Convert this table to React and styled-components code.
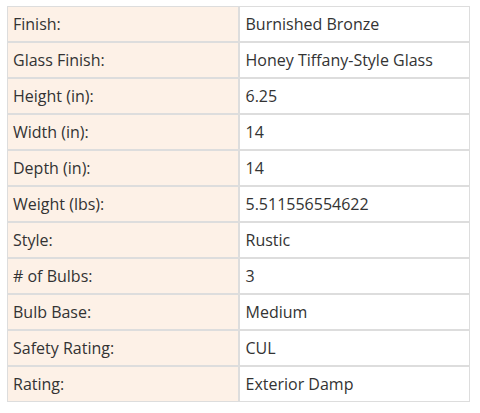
import React from "react";
import styled, { createGlobalStyle } from "styled-components";

const Global = createGlobalStyle`
  html, body { margin: 0; padding: 0; background: #fff; }
`;

const Page = styled.div`
  padding: 6px 10px 0 7px;
`;

const Table = styled.table`
  width: 463px;
  border-collapse: separate;
  border-spacing: 0;
  font-family: "Open Sans", "Liberation Sans", sans-serif;
  font-size: 16px;
  color: #333;
`;

const Cell = styled.td`
  width: 50%;
  height: 36px;
  box-sizing: border-box;
  padding: 0 6px 1px ${(p) => (p.$label ? "5px" : "6px")};
  border: 1px solid #ddd;
  background: ${(p) => (p.$label ? "#fdf1e7" : "#fff")};
  vertical-align: middle;
  white-space: nowrap;
`;

const rows = [
  ["Finish:", "Burnished Bronze"],
  ["Glass Finish:", "Honey Tiffany-Style Glass"],
  ["Height (in):", "6.25"],
  ["Width (in):", "14"],
  ["Depth (in):", "14"],
  ["Weight (lbs):", "5.511556554622"],
  ["Style:", "Rustic"],
  ["# of Bulbs:", "3"],
  ["Bulb Base:", "Medium"],
  ["Safety Rating:", "CUL"],
  ["Rating:", "Exterior Damp"],
];

export default function App() {
  return (
    <>
      <Global />
      <Page>
        <Table>
          <tbody>
            {rows.map(([k, v]) => (
              <tr key={k}>
                <Cell $label>{k}</Cell>
                <Cell>{v}</Cell>
              </tr>
            ))}
          </tbody>
        </Table>
      </Page>
    </>
  );
}
